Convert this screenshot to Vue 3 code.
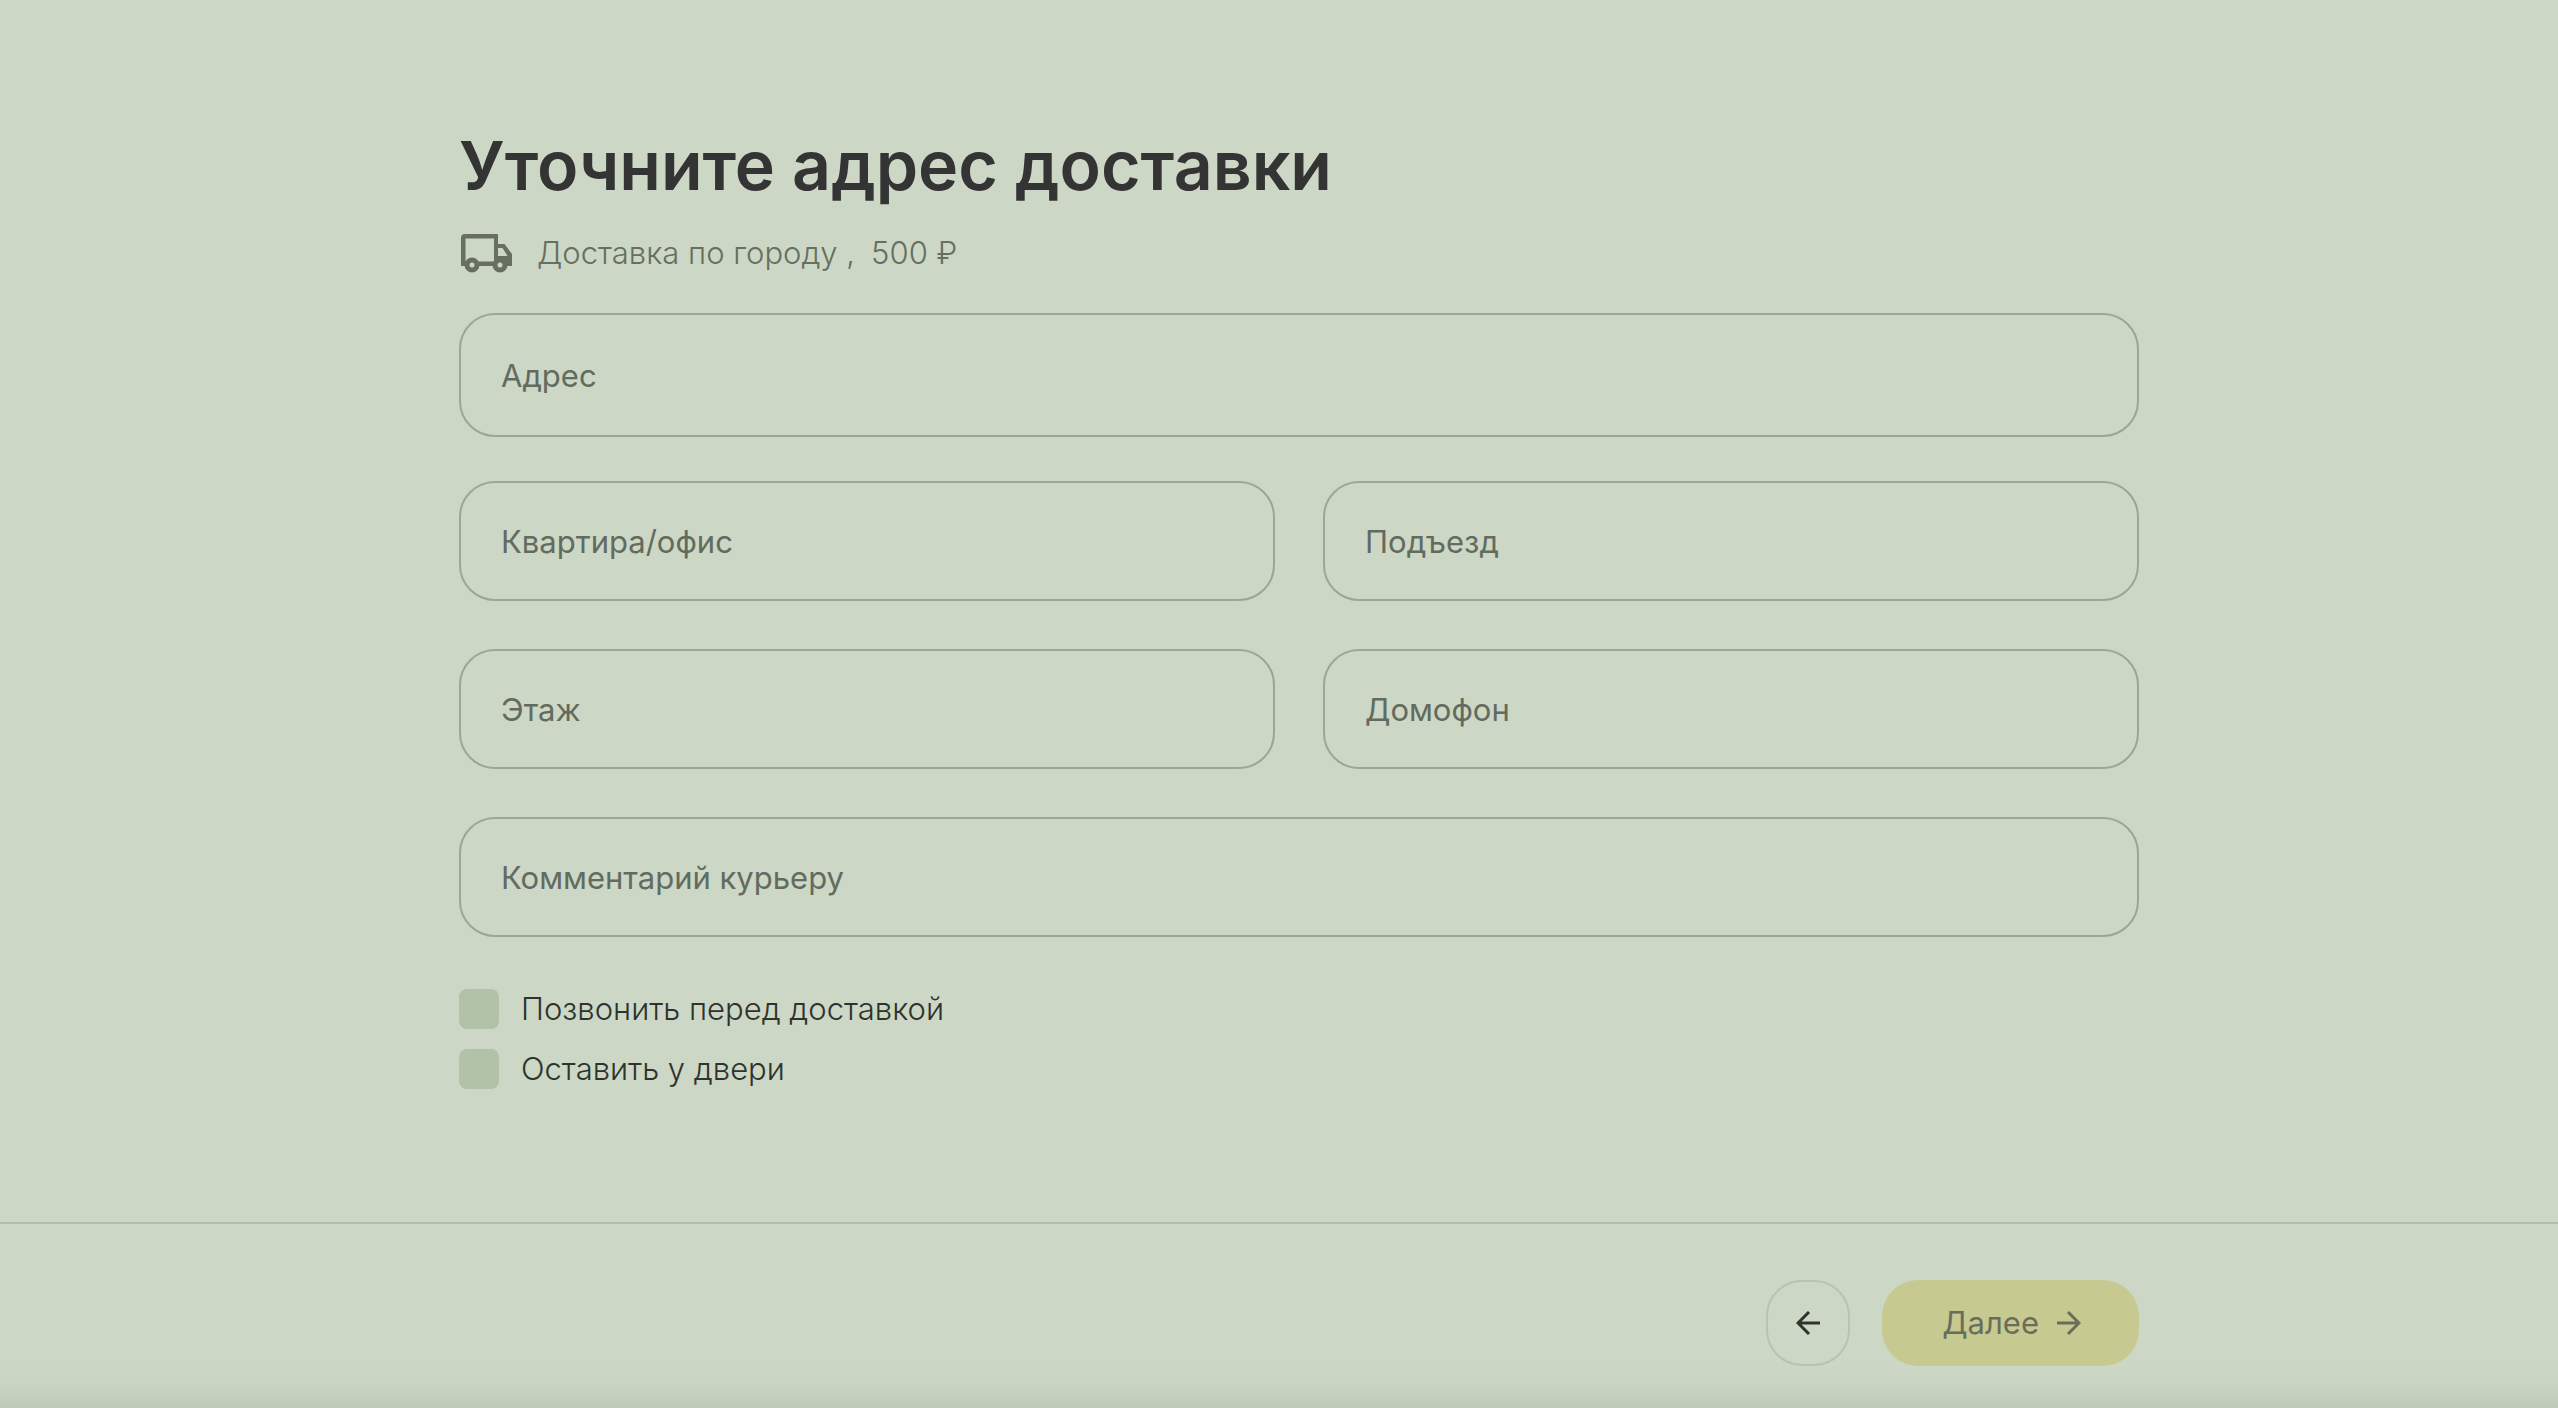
<script setup>
import { reactive } from 'vue'

const fields = [
  { id: 'address', label: 'Адрес', wide: true, tall: true },
  { id: 'flat', label: 'Квартира/офис' },
  { id: 'entrance', label: 'Подъезд' },
  { id: 'floor', label: 'Этаж' },
  { id: 'intercom', label: 'Домофон' },
  { id: 'comment', label: 'Комментарий курьеру', wide: true },
]

const options = [
  { id: 'call', label: 'Позвонить перед доставкой' },
  { id: 'door', label: 'Оставить у двери' },
]

const form = reactive({ address: '', flat: '', entrance: '', floor: '', intercom: '', comment: '', call: false, door: false })
</script>

<template>
  <div class="page">
    <main class="content">
      <form id="delivery" class="container" @submit.prevent>
        <h1 class="title">Уточните адрес доставки</h1>
        <div class="method">
          <svg class="truck" viewBox="0 0 56 40" aria-hidden="true">
            <path fill="#666f61" fill-rule="evenodd" d="M6 1H39V11h6.500L53 21V33H46A6 6 0 0 0 34 33H19A6 6 0 0 0 7 33H2V5a4 4 0 0 1 4-4zM6.500 5.500V28.500H8.500A7 7 0 0 1 18 28.500H35V5.500zM39 15V23H48.500L43.500 15z" />
            <circle cx="13" cy="32" r="5" fill="none" stroke="#666f61" stroke-width="5" />
            <circle cx="41" cy="32" r="5" fill="none" stroke="#666f61" stroke-width="5" />
          </svg>
          <p class="method-text"><span>Доставка по городу ,</span><span>500 ₽</span></p>
        </div>
        <div class="fields">
          <input
            v-for="field in fields"
            :id="field.id"
            :key="field.id"
            v-model="form[field.id]"
            class="field"
            :class="{ wide: field.wide, tall: field.tall }"
            type="text"
            :placeholder="field.label"
            :aria-label="field.label"
          />
        </div>
        <div class="options">
          <label v-for="option in options" :key="option.id" class="option" :for="option.id">
            <input :id="option.id" v-model="form[option.id]" class="check" type="checkbox" />
            <span>{{ option.label }}</span>
          </label>
        </div>
      </form>
    </main>
    <footer class="footer">
      <div class="container actions">
        <button class="back" type="button" aria-label="Назад">
          <svg class="arrow" viewBox="0 0 24 24" aria-hidden="true"><path d="M24 12H2M13 1L2 12l11 11" /></svg>
        </button>
        <button class="next" type="submit" form="delivery">
          <span>Далее</span>
          <svg class="arrow" viewBox="0 0 24 24" aria-hidden="true"><path d="M0 12h22M11 1l11 11-11 11" /></svg>
        </button>
      </div>
    </footer>
  </div>
</template>

<style>
body {
  margin: 0;
  background: #ccd7c5;
}
</style>

<style scoped>
.page {
  display: flex;
  flex-direction: column;
  min-height: 100vh;
  background: linear-gradient(to top, #c0cab8 0, #c8d3c1 20px, #ccd7c5 44px);
  color: #2f332d;
  font-family: Inter, "Noto Sans", sans-serif;
  font-size: 31px;
  line-height: 40px;
}
.content {
  flex: 1;
  padding: 123px 0 96px 40px;
}
.container {
  box-sizing: border-box;
  width: 100%;
  max-width: 1680px;
  margin: 0 auto;
}
.title {
  margin: 0;
  color: #343434;
  font-size: 68px;
  font-weight: 600;
  line-height: 84px;
}
.method {
  display: flex;
  align-items: center;
  gap: 22px;
  margin: 26px 0 40px;
  color: #666f61;
}
.truck {
  width: 56px;
  height: 40px;
}
.method-text {
  display: flex;
  gap: 16px;
  margin: 0;
  font-weight: 300;
}
.fields {
  display: grid;
  grid-template-columns: 1fr 1fr;
  gap: 48px;
}
.field {
  box-sizing: border-box;
  width: 100%;
  height: 120px;
  padding: 0 40px;
  border: 2px solid #97aa8d;
  border-radius: 36px;
  background: transparent;
  color: #2f332d;
  font: inherit;
}
.field::placeholder {
  color: #626b5e;
  opacity: 1;
}
.wide {
  grid-column: 1 / -1;
}
.tall {
  height: 124px;
  margin-bottom: -4px;
}
.options {
  display: flex;
  flex-direction: column;
  align-items: flex-start;
  gap: 20px;
  margin-top: 52px;
}
.option {
  display: flex;
  align-items: center;
  gap: 22px;
  font-weight: 300;
}
.check {
  width: 40px;
  height: 40px;
  margin: 0;
  border-radius: 8px;
  background: #b1c2a9;
  appearance: none;
}
.check:checked {
  background: #74896a;
}
.footer {
  padding: 56px 0 42px 40px;
  border-top: 2px solid #b2c0ab;
}
.actions {
  display: flex;
  justify-content: flex-end;
  gap: 32px;
}
.back,
.next {
  display: flex;
  align-items: center;
  justify-content: center;
  box-sizing: border-box;
  height: 86px;
  padding: 0;
  border-radius: 36px;
  font: inherit;
}
.back {
  width: 84px;
  border: 2px solid #b7c4b0;
  background: transparent;
  color: #2f332d;
}
.next {
  gap: 18px;
  padding: 0 58px 0 60px;
  border: 0;
  background: #c7ca90;
  color: #6b6d5b;
}
.arrow {
  width: 24px;
  height: 24px;
  fill: none;
  stroke: currentColor;
  stroke-width: 3;
}
</style>
